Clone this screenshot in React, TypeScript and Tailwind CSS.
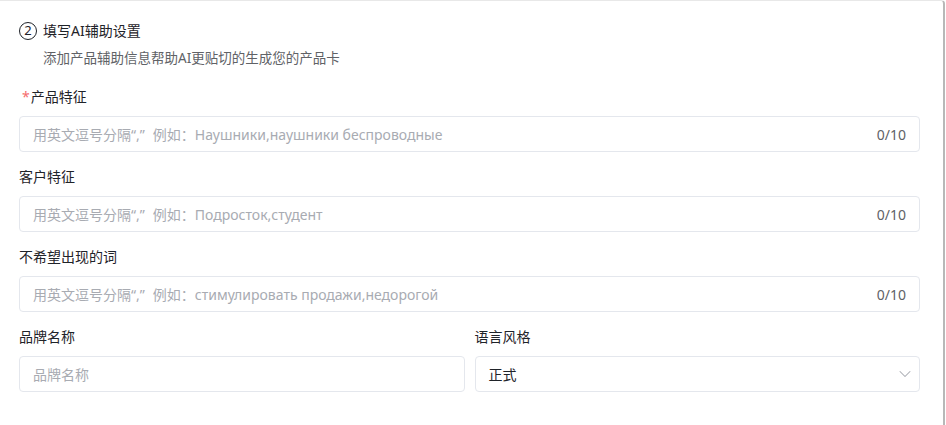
import { ChevronDown } from "lucide-react";

const font = { fontFamily: '"Noto Sans", "Noto Sans CJK SC", sans-serif' };

function TextField({ label, required, placeholder }: { label: string; required?: boolean; placeholder: string }) {
  return (
    <div className="mb-[14px]">
      <div className="h-[22px] leading-[22px] text-[14px] text-[#1f2329] mb-2">
        {required && <span className="text-[#f56c6c] ml-[3px] mr-[1px]">*</span>}
        {label}
      </div>
      <div className="h-9 rounded border border-[#e4e7ed] flex items-center pl-[13px] pr-[13px] bg-white">
        <span className="flex-1 text-[14px] text-[#a8abb2] truncate">
          用英文逗号分隔“,”<span className="ml-[8px]">例如：</span>
          {placeholder}
        </span>
        <span className="text-[14px] text-[#606266]">0/10</span>
      </div>
    </div>
  );
}

export default function App() {
  return (
    <div className="w-[946px] h-[425px] bg-white overflow-hidden" style={font}>
      <div className="w-[945px] h-full border-t border-r-2 border-t-[#e8e8e8] border-r-[#b8b8b8] rounded-tr pl-[19px] pr-[23px]">
        <div className="pt-[20px] flex items-center gap-[6px] h-[39px]">
          <div className="w-[18px] h-[18px] rounded-full border-[1.5px] border-[#1f2329] flex items-center justify-center text-[13px] leading-none text-[#1f2329]">
            2
          </div>
          <span className="text-[14px] text-[#1f2329]">填写AI辅助设置</span>
        </div>
        <div className="mt-[8px] ml-[24px] text-[13.5px] text-[#606266] h-[20px] leading-[20px]">
          添加产品辅助信息帮助AI更贴切的生成您的产品卡
        </div>
        <div className="mt-[18px]">
          <TextField label="产品特征" required placeholder="Наушники,наушники беспроводные" />
          <TextField label="客户特征" placeholder="Подросток,студент" />
          <TextField label="不希望出现的词" placeholder="стимулировать продажи,недорогой" />
          <div className="grid grid-cols-2 gap-[10px]">
            <div>
              <div className="h-[22px] leading-[22px] text-[14px] text-[#1f2329] mb-2">品牌名称</div>
              <div className="h-9 rounded border border-[#e4e7ed] flex items-center px-[13px] text-[14px] text-[#a8abb2]">
                品牌名称
              </div>
            </div>
            <div>
              <div className="h-[22px] leading-[22px] text-[14px] text-[#1f2329] mb-2">语言风格</div>
              <div className="h-9 rounded border border-[#e4e7ed] flex items-center justify-between pl-[13px] pr-[4px] text-[14px] text-[#1f2329]">
                <span>正式</span>
                <ChevronDown size={20} strokeWidth={1.25} className="text-[#a8abb2]" />
              </div>
            </div>
          </div>
        </div>
      </div>
    </div>
  );
}
